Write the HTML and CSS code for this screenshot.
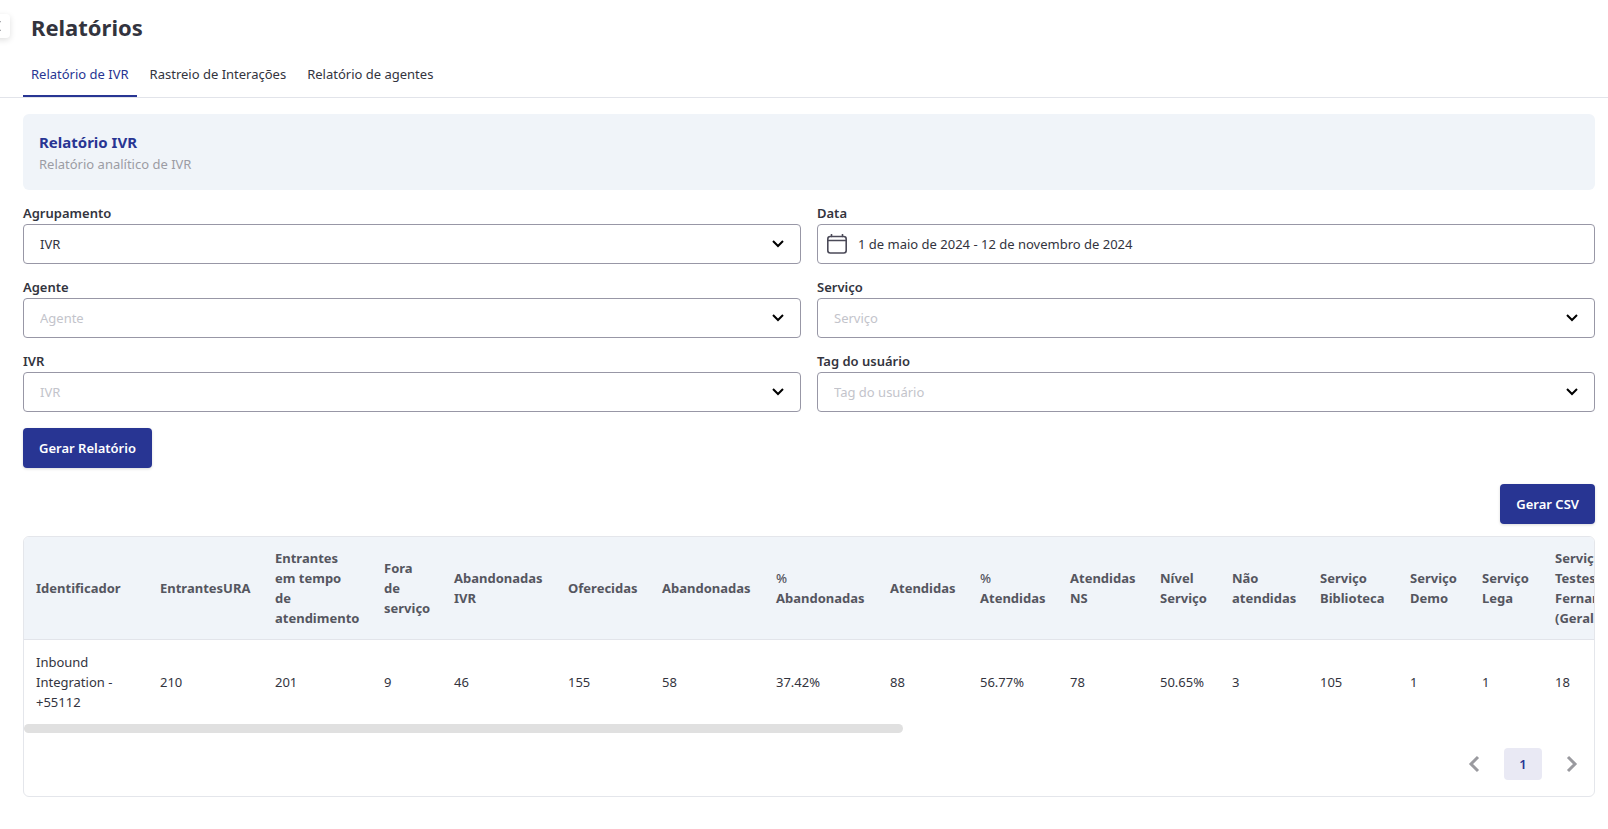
FILE: index.html
```html
<!DOCTYPE html>
<html lang="pt-BR">
<head>
<meta charset="utf-8">
<title>Relatórios</title>
<link rel="stylesheet" href="styles.css">
</head>
<body>
<button class="drawer-toggle" type="button" aria-label="Abrir menu">
  <svg width="12" height="12" viewBox="0 0 12 12"><path d="M8 1 3 6l5 5"/></svg>
</button>
<header class="page-header">
  <h1 class="page-title">Relatórios</h1>
  <nav class="tabs">
    <a class="tab tab-active" href="#ivr">Relatório de IVR</a>
    <a class="tab" href="#interacoes">Rastreio de Interações</a>
    <a class="tab" href="#agentes">Relatório de agentes</a>
  </nav>
</header>
<main class="content">
  <section class="banner">
    <h2 class="banner-title">Relatório IVR</h2>
    <p class="banner-text">Relatório analítico de IVR</p>
  </section>
  <form class="filters">
    <div class="field">
      <label class="label" for="grouping">Agrupamento</label>
      <div class="control">
        <select class="select" id="grouping"><option>IVR</option></select>
        <svg class="chevron" width="12" height="8" viewBox="0 0 12 8"><path d="m1 1 5 5 5-5"/></svg>
      </div>
    </div>
    <div class="field">
      <label class="label" for="date">Data</label>
      <div class="control date-control">
        <svg class="calendar" width="20" height="20" viewBox="0 0 20 20"><rect x="0.8" y="2.5" width="18.4" height="16.5" rx="2.5"/><path d="M1 6.5h18M4.5 0.5v2M15.5 0.5v2"/></svg>
        <input class="date-input" id="date" type="text" value="1 de maio de 2024 - 12 de novembro de 2024">
      </div>
    </div>
    <div class="field">
      <label class="label" for="agent">Agente</label>
      <div class="control">
        <select class="select select-empty" id="agent"><option>Agente</option></select>
        <svg class="chevron" width="12" height="8" viewBox="0 0 12 8"><path d="m1 1 5 5 5-5"/></svg>
      </div>
    </div>
    <div class="field">
      <label class="label" for="service">Serviço</label>
      <div class="control">
        <select class="select select-empty" id="service"><option>Serviço</option></select>
        <svg class="chevron" width="12" height="8" viewBox="0 0 12 8"><path d="m1 1 5 5 5-5"/></svg>
      </div>
    </div>
    <div class="field">
      <label class="label" for="ivr">IVR</label>
      <div class="control">
        <select class="select select-empty" id="ivr"><option>IVR</option></select>
        <svg class="chevron" width="12" height="8" viewBox="0 0 12 8"><path d="m1 1 5 5 5-5"/></svg>
      </div>
    </div>
    <div class="field">
      <label class="label" for="tag">Tag do usuário</label>
      <div class="control">
        <select class="select select-empty" id="tag"><option>Tag do usuário</option></select>
        <svg class="chevron" width="12" height="8" viewBox="0 0 12 8"><path d="m1 1 5 5 5-5"/></svg>
      </div>
    </div>
  </form>
  <div class="actions"><button class="button" type="button">Gerar Relatório</button></div>
  <div class="actions actions-end"><button class="button" type="button">Gerar CSV</button></div>
  <section class="card">
    <div class="table-scroll">
      <table class="table">
        <colgroup>
          <col class="w124"><col class="w115"><col class="w109"><col class="w70"><col class="w114"><col class="w94"><col class="w114"><col class="w114"><col class="w90"><col class="w90"><col class="w90"><col class="w72"><col class="w88"><col class="w90"><col class="w72"><col class="w73"><col>
        </colgroup>
        <thead>
          <tr>
            <th>Identificador</th><th>EntrantesURA</th><th>Entrantes<br>em tempo<br>de<br>atendimento</th><th>Fora<br>de<br>serviço</th><th>Abandonadas<br>IVR</th><th>Oferecidas</th><th>Abandonadas</th><th><span class="percent">%</span><br>Abandonadas</th><th>Atendidas</th><th><span class="percent">%</span><br>Atendidas</th><th>Atendidas<br>NS</th><th>Nível<br>Serviço</th><th>Não<br>atendidas</th><th>Serviço<br>Biblioteca</th><th>Serviço<br>Demo</th><th>Serviço<br>Lega</th><th>Serviço<br>Testes<br>Fernando<br>(Geral)</th>
          </tr>
        </thead>
        <tbody>
          <tr>
            <td>Inbound<br>Integration -<br>+55112</td><td>210</td><td>201</td><td>9</td><td>46</td><td>155</td><td>58</td><td>37.42%</td><td>88</td><td>56.77%</td><td>78</td><td>50.65%</td><td>3</td><td>105</td><td>1</td><td>1</td><td>18</td>
          </tr>
        </tbody>
      </table>
    </div>
    <div class="scrollbar"><div class="scroll-thumb"></div></div>
    <nav class="pagination">
      <button class="page-arrow" type="button" aria-label="Anterior"><svg width="12" height="18" viewBox="0 0 12 18"><path d="m10 2-7 7 7 7"/></svg></button>
      <button class="page-number" type="button">1</button>
      <button class="page-arrow" type="button" aria-label="Próxima"><svg width="12" height="18" viewBox="0 0 12 18"><path d="m2 2 7 7-7 7"/></svg></button>
    </nav>
  </section>
</main>
</body>
</html>
```
FILE: styles.css
```css
* { box-sizing: border-box; }
body {
  margin: 0;
  background: #fff;
  color: #33343e;
  font-family: "Segoe UI", "Noto Sans", "Open Sans", sans-serif;
  font-size: 13px;
  line-height: 20px;
}
button, input, select { font: inherit; color: inherit; }
svg { fill: none; stroke: currentColor; }
.drawer-toggle {
  position: absolute;
  left: -14px;
  top: 14px;
  width: 24px;
  height: 24px;
  padding: 0;
  display: grid;
  place-items: center;
  border: 0;
  border-radius: 4px;
  background: #fff;
  box-shadow: 0 2px 6px rgba(0, 0, 0, .13);
  stroke-width: 2;
}
.page-header { border-bottom: 1px solid #e2e4ea; padding: 12px 23px 0; }
.page-title { margin: 0; padding: 0 8px; font-size: 22px; line-height: 30px; font-weight: 700; }
.tabs { display: flex; gap: 5px; padding-top: 10px; }
.tab { padding: 12px 8px 11px; color: inherit; text-decoration: none; border-bottom: 2px solid transparent; }
.tab-active { color: #283593; border-color: #283593; }
.content { padding: 16px 13px 31px 23px; }
.banner { background: #f0f4f9; border-radius: 6px; padding: 16px; }
.banner-title { margin: 0; color: #283593; font-size: 15px; line-height: 24px; font-weight: 700; }
.banner-text { margin: 0; color: #9c9ca4; }
.filters { display: grid; grid-template-columns: 1fr 1fr; gap: 16px; margin-top: 16px; }
.label { display: block; line-height: 14px; padding-bottom: 4px; font-weight: 600; }
.control { position: relative; height: 40px; }
.select {
  appearance: none;
  display: block;
  width: 100%;
  height: 40px;
  padding: 0 40px 0 16px;
  border: 1px solid #9897a6;
  border-radius: 4px;
  background: #fff;
}
.select-empty { color: #c3c4cb; }
.chevron { position: absolute; right: 17px; top: 16px; color: #000; stroke-width: 2; pointer-events: none; }
.date-control { display: flex; align-items: center; gap: 11px; padding: 0 9px; border: 1px solid #9897a6; border-radius: 4px; }
.calendar { stroke-width: 1.6; stroke-linecap: round; color: #4b4a58; flex: none; }
.date-input { flex: 1; min-width: 0; padding: 0; border: 0; outline: 0; background: none; }
.actions { display: flex; margin-top: 16px; }
.actions-end { justify-content: flex-end; }
.button {
  height: 40px;
  padding: 0 16px;
  border: 0;
  border-radius: 4px;
  background: #283593;
  color: #fff;
  font-weight: 600;
  box-shadow: 0 1px 3px rgba(0, 0, 0, .15);
}
.card { margin-top: 12px; border: 1px solid #e4e6eb; border-radius: 6px; overflow: hidden; }
.table-scroll { overflow-x: auto; scrollbar-width: none; }
.table { table-layout: fixed; width: 2807px; border-collapse: separate; border-spacing: 0; }
.table th, .table td { padding: 12px; text-align: left; vertical-align: middle; white-space: nowrap; }
.table th { padding: 11px 12px; background: #f0f4f9; color: #55565f; font-weight: 700; border-bottom: 1px solid #e2e4ea; }
.table .percent { font-weight: 500; }
.w70 { width: 70px; }
.w72 { width: 72px; }
.w73 { width: 73px; }
.w88 { width: 88px; }
.w90 { width: 90px; }
.w94 { width: 94px; }
.w109 { width: 109px; }
.w114 { width: 114px; }
.w115 { width: 115px; }
.w124 { width: 124px; }
.scroll-thumb { width: 56%; height: 9px; border-radius: 5px; background: #e0e0e0; }
.pagination { display: flex; justify-content: flex-end; align-items: center; gap: 16px; padding: 15px 8px 16px; }
.page-arrow { display: grid; place-items: center; width: 28px; height: 32px; padding: 0; border: 0; background: none; color: #9a9a9f; stroke-width: 3; }
.page-number { width: 38px; height: 32px; padding: 0; border: 0; border-radius: 4px; background: #e9e9f4; color: #283593; font-weight: 600; }
```
